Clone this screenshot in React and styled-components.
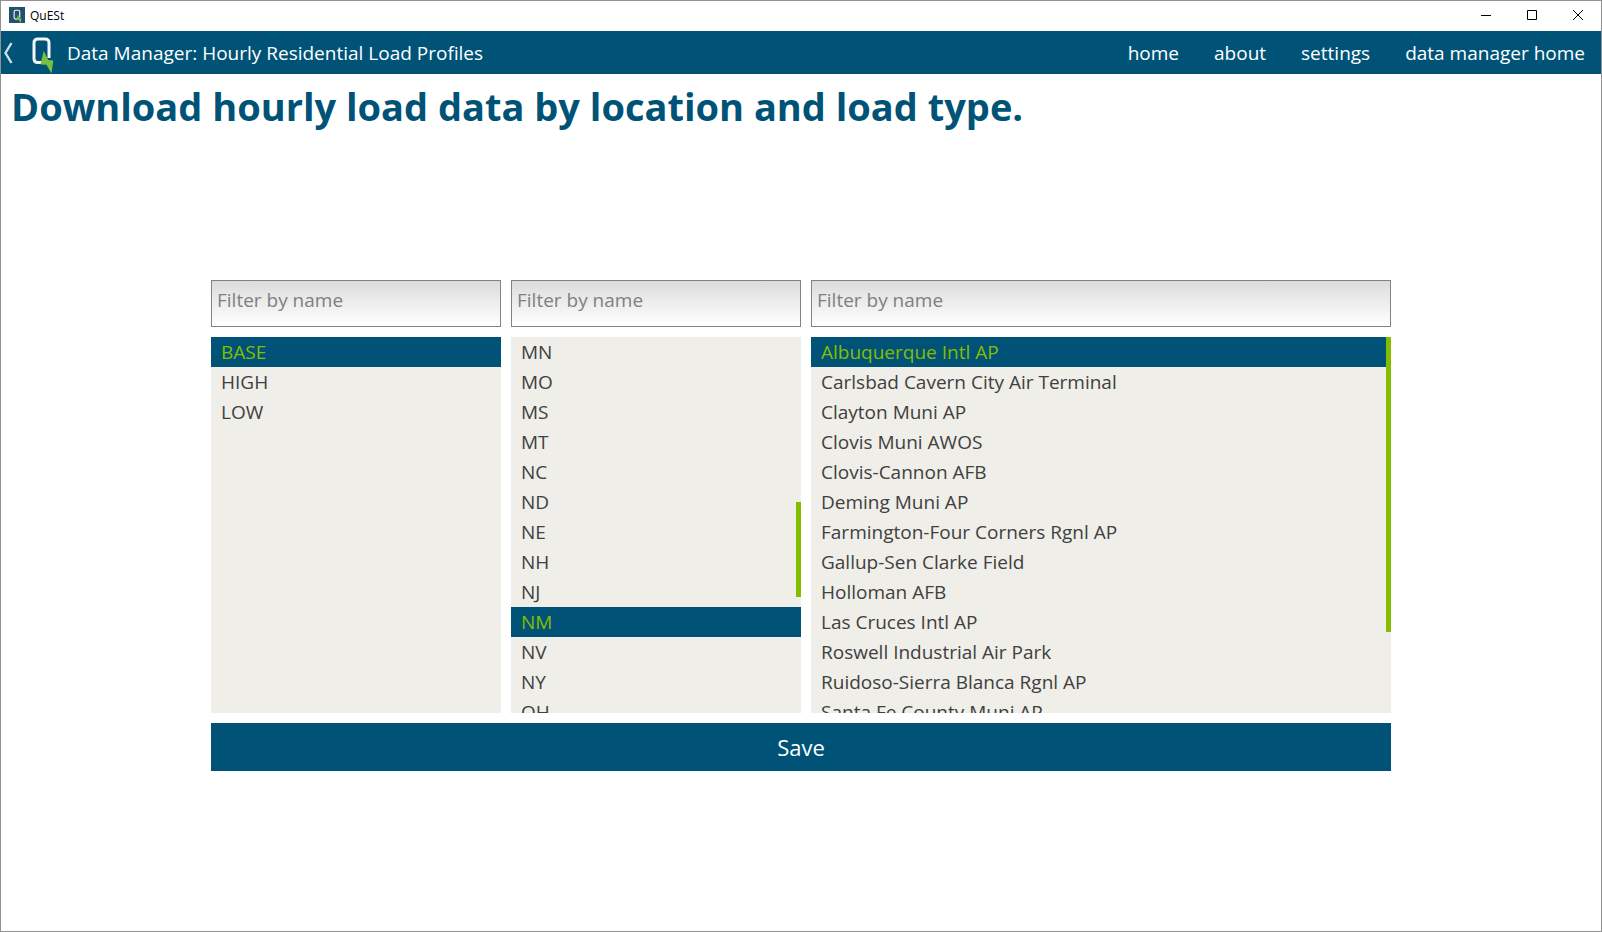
import React, { useEffect, useRef, useState } from 'react'
import styled, { createGlobalStyle } from 'styled-components'

const loadTypes = ['BASE', 'HIGH', 'LOW']

const states = [
    'AK', 'AL', 'AR', 'AZ', 'CA', 'CO', 'CT', 'DE', 'FL', 'GA',
    'HI', 'IA', 'ID', 'IL', 'IN', 'KS', 'KY', 'LA', 'MA', 'MD',
    'ME', 'MI', 'MN', 'MO', 'MS', 'MT', 'NC', 'ND', 'NE', 'NH',
    'NJ', 'NM', 'NV', 'NY', 'OH', 'OK', 'OR', 'PA', 'RI', 'SC',
    'SD', 'TN', 'TX', 'UT', 'VA', 'VT', 'WA', 'WI', 'WV', 'WY',
]

const locations = [
    'Albuquerque Intl AP',
    'Carlsbad Cavern City Air Terminal',
    'Clayton Muni AP',
    'Clovis Muni AWOS',
    'Clovis-Cannon AFB',
    'Deming Muni AP',
    'Farmington-Four Corners Rgnl AP',
    'Gallup-Sen Clarke Field',
    'Holloman AFB',
    'Las Cruces Intl AP',
    'Roswell Industrial Air Park',
    'Ruidoso-Sierra Blanca Rgnl AP',
    'Santa Fe County Muni AP',
    'Taos Muni AP',
    'Truth or Consequences Muni AP',
    'Tucumcari Muni AP',
]

const ROW_HEIGHT = 30
const LIST_HEIGHT = 376

const QuestLogo = ({ width, height }) => (
    <svg width={width} height={height} viewBox="0 0 24 40" fill="none" aria-hidden="true">
        <path d="M11 29.500H7Q3 29.500 3 25.500V10Q3 6 7 6H14Q18 6 18 10V25" stroke="#f4f7f9" strokeWidth="3" />
        <path d="M12.700 18L9.500 31.500L15.500 31.800L20.500 40.500L22.300 27.500L17.300 27Z" fill="#7ac142" />
    </svg>
)

const FilterList = ({ label, items, initial, firstRow = 0 }) => {
    const [selected, setSelected] = useState(initial)
    const [filter, setFilter] = useState('')
    const [scrollTop, setScrollTop] = useState(firstRow * ROW_HEIGHT)
    const scrollRef = useRef(null)

    const shown = items.filter(item => item.toLowerCase().includes(filter.toLowerCase()))
    const total = shown.length * ROW_HEIGHT

    // only the rows inside the view are rendered
    const start = Math.floor(scrollTop / ROW_HEIGHT)
    const end = Math.ceil((scrollTop + LIST_HEIGHT) / ROW_HEIGHT)

    useEffect(() => {
        scrollRef.current.scrollTop = firstRow * ROW_HEIGHT
    }, [firstRow])

    const onFilter = e => {
        setFilter(e.target.value)
        setScrollTop(0)
        scrollRef.current.scrollTop = 0
    }

    return (
        <Column>
            <FilterInput
                aria-label={`Filter ${label} by name`}
                placeholder="Filter by name"
                value={filter}
                onChange={onFilter}
            />
            <ListBox>
                <Scroll ref={scrollRef} onScroll={e => setScrollTop(e.target.scrollTop)}>
                    <List aria-label={label} style={{ height: total, paddingTop: start * ROW_HEIGHT }}>
                        {shown.slice(start, end).map(item => (
                            <li key={item}>
                                <Item
                                    type="button"
                                    $selected={item === selected}
                                    aria-pressed={item === selected}
                                    onClick={() => setSelected(item)}
                                >
                                    {item}
                                </Item>
                            </li>
                        ))}
                    </List>
                </Scroll>
                {total > LIST_HEIGHT && (
                    <Thumb
                        style={{
                            top: `${scrollTop / total * 100}%`,
                            height: `${LIST_HEIGHT / total * 100}%`,
                        }}
                    />
                )}
            </ListBox>
        </Column>
    )
}

const App = () => (
    <>
        <GlobalStyle />
        <Window>
            <TitleBar>
                <AppIcon>
                    <QuestLogo width={9} height={15} />
                </AppIcon>
                <AppName>QuESt</AppName>
                <WindowButton type="button" aria-label="Minimize">
                    <svg width="10" height="10" aria-hidden="true"><path d="M0 5.500H10" stroke="#000" /></svg>
                </WindowButton>
                <WindowButton type="button" aria-label="Maximize">
                    <svg width="10" height="10" aria-hidden="true"><path d="M0.500 0.500H9.500V9.500H0.500Z" stroke="#000" fill="none" /></svg>
                </WindowButton>
                <WindowButton type="button" aria-label="Close">
                    <svg width="10" height="10" aria-hidden="true"><path d="M0 0L10 10M10 0L0 10" stroke="#000" /></svg>
                </WindowButton>
            </TitleBar>
            <NavBar>
                <BackButton type="button" aria-label="Back">
                    <svg width="10" height="22" viewBox="0 0 10 22" fill="none" aria-hidden="true">
                        <path d="M8.500 1L2.500 11L8.500 21" stroke="#d3dfe6" strokeWidth="2.400" />
                    </svg>
                </BackButton>
                <QuestLogo width={24} height={40} />
                <ScreenName>Data Manager: Hourly Residential Load Profiles</ScreenName>
                <NavLinks>
                    <NavLink href="#home">home</NavLink>
                    <NavLink href="#about">about</NavLink>
                    <NavLink href="#settings">settings</NavLink>
                    <NavLink href="#data-manager">data manager home</NavLink>
                </NavLinks>
            </NavBar>
            <Screen>
                <Heading>Download hourly load data by location and load type.</Heading>
                <Center>
                    <Panel>
                        <Columns>
                            <FilterList label="load types" items={loadTypes} initial="BASE" />
                            <FilterList label="states" items={states} initial="NM" firstRow={22} />
                            <FilterList label="locations" items={locations} initial="Albuquerque Intl AP" />
                        </Columns>
                        <SaveButton type="button">Save</SaveButton>
                    </Panel>
                </Center>
            </Screen>
        </Window>
    </>
)

const GlobalStyle = createGlobalStyle`
*{
    box-sizing: border-box;
}
body{
    margin: 0;
    background: #fff;
    font-family: "Open Sans", "Noto Sans", sans-serif;
    font-size: 19px;
}
button, input{
    font: inherit;
    border: none;
    border-radius: 0;
}
`
const Window = styled.div`
min-height: 100vh;
display: flex;
flex-direction: column;
border: 1px solid #919191;
`

// Title bar
const TitleBar = styled.header`
height: 30px;
padding: 0 0 2px 8px;
display: flex;
align-items: center;
`
const AppIcon = styled.span`
width: 16px;
height: 16px;
display: flex;
align-items: center;
justify-content: center;
background: #24506f;
`
const AppName = styled.span`
margin-left: 5px;
flex: 1;
color: #000;
font-size: 12px;
`
const WindowButton = styled.button`
width: 46px;
height: 28px;
padding: 0;
display: flex;
align-items: center;
justify-content: center;
background: none;
&:hover{
    background: #e5e5e5;
}
`

// Navigation
const NavBar = styled.nav`
height: 43px;
padding-right: 16px;
display: flex;
align-items: center;
background: #005376;
color: #fff;
`
const BackButton = styled.button`
width: 30px;
height: 43px;
padding: 0 0 0 2px;
display: flex;
align-items: center;
background: none;
`
const ScreenName = styled.span`
margin-left: 12px;
`
const NavLinks = styled.div`
margin-left: auto;
display: flex;
gap: 35px;
`
const NavLink = styled.a`
color: #fff;
text-decoration: none;
`

// Screen
const Screen = styled.main`
padding: 10px 0;
flex: 1;
display: flex;
flex-direction: column;
`
const Heading = styled.h1`
margin: 0 0 2px;
padding: 0 10px;
color: #005376;
font-size: 38px;
line-height: 44px;
`
const Center = styled.div`
flex: 1;
display: flex;
align-items: center;
justify-content: center;
`
const Panel = styled.section`
width: 75%;
padding: 0 10px;
display: flex;
flex-direction: column;
gap: 10px;
`
const Columns = styled.div`
display: grid;
grid-template-columns: 1fr 1fr 2fr;
gap: 10px;
`
const Column = styled.div`
min-width: 0;
display: flex;
flex-direction: column;
gap: 10px;
`
const FilterInput = styled.input`
width: 100%;
height: 47px;
padding: 0 5px 8px;
border: 1px solid #828282;
background: linear-gradient(#dcdcdc, #fff);
color: #000;
outline: none;
&::placeholder{
    color: #808080;
    opacity: 1;
}
`
const ListBox = styled.div`
position: relative;
background: #efeee9;
`
const Scroll = styled.div`
height: ${LIST_HEIGHT}px;
overflow-y: auto;
scrollbar-width: none;
`
const List = styled.ul`
margin: 0;
padding: 0;
list-style: none;
`
const Item = styled.button`
width: 100%;
height: ${ROW_HEIGHT}px;
padding: 0 10px;
display: block;
background: ${props => props.$selected ? '#005376' : 'none'};
color: ${props => props.$selected ? '#84bd00' : '#404040'};
line-height: 30px;
text-align: left;
white-space: nowrap;
`
const Thumb = styled.div`
width: 5px;
position: absolute;
right: 0;
background: #84bd00;
`
const SaveButton = styled.button`
height: 48px;
background: #005376;
color: #fff;
font-size: 22px;
`

export default App
